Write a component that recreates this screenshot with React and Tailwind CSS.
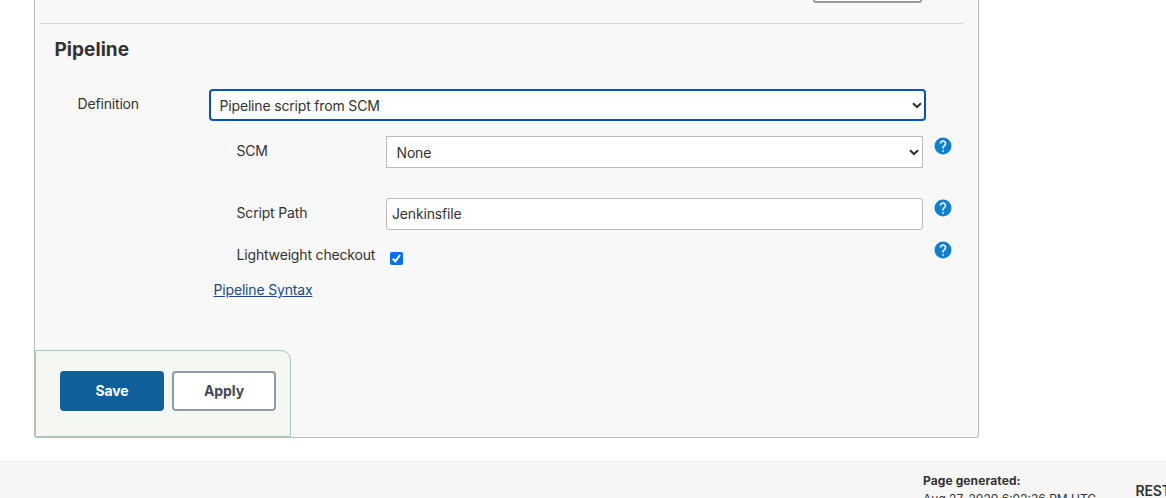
import React from "react";

function HelpIcon() {
  return (
    <svg viewBox="0 0 24 24" className="size-[20px] shrink-0" aria-label="Help">
      <circle cx="12" cy="12" r="10.2" fill="#0f7fcf" />
      <path
        fill="#f8f8f8"
        d="M13 19h-2v-2h2v2zm2.07-7.75l-.9.92C13.45 12.9 13 13.5 13 15h-2v-.5c0-1.1.45-2.1 1.17-2.83l1.24-1.26c.37-.36.59-.86.59-1.41 0-1.1-.9-2-2-2s-2 .9-2 2H8c0-2.21 1.79-4 4-4s4 1.79 4 4c0 .88-.36 1.68-.93 2.25z"
      />
    </svg>
  );
}

function Chevron() {
  return (
    <svg viewBox="0 0 10 7" className="h-[7px] w-[10px] shrink-0" fill="none">
      <path d="M1 1.3 L5 5 L9 1.3" stroke="#303030" strokeWidth="2.1" />
    </svg>
  );
}

export default function App() {
  return (
    <div className="flex h-[498px] w-[1166px] flex-col overflow-hidden bg-white font-['Inter','Liberation_Sans',sans-serif] text-[14px] leading-[20px] tracking-[-0.17px] text-[#333]">
      <main className="ml-[34px] flex h-[438px] w-[945px] shrink-0 flex-col rounded-b-[3px] border border-t-0 border-[#bbb] bg-[#f8f8f8]">
        <div className="flex h-[23px] shrink-0">
          <div className="ml-[778px] h-[3px] w-[109px] rounded-b-[4px] border-2 border-t-0 border-[#929da6] bg-white" />
        </div>
        <div className="ml-[5px] h-px w-[923px] shrink-0 bg-[#d6d6d6]" />
        <h2 className="ml-[19.5px] mt-[12px] h-[28px] shrink-0 text-[19px] font-bold leading-[28px] tracking-[0.05px]">
          Pipeline
        </h2>

        <div className="mt-[25px] flex h-[32px] shrink-0">
          <label className="ml-[42.5px] w-[131.5px] pt-[5px]">Definition</label>
          <div className="flex w-[717px] items-center justify-between rounded-[4px] border-2 border-[#0054bd] bg-white pl-[8.5px] pr-[2px] pt-px">
            <span>Pipeline script from SCM</span>
            <Chevron />
          </div>
        </div>

        <div className="mt-[15px] flex h-[32px] shrink-0">
          <label className="ml-[201.5px] w-[149.5px] pt-[5px]">SCM</label>
          <div className="flex w-[537px] items-center justify-between border border-[#bbb] bg-white pl-[9.5px] pr-[3px] pt-px">
            <span>None</span>
            <Chevron />
          </div>
          <div className="ml-[10px]">
            <HelpIcon />
          </div>
        </div>

        <div className="mt-[30px] flex h-[32px] shrink-0">
          <label className="ml-[201.5px] w-[149.5px] pt-[5px]">Script Path</label>
          <div className="flex w-[537px] items-center rounded-[3px] border border-[#bbb] bg-white pl-[5px]">
            Jenkinsfile
          </div>
          <div className="ml-[10px]">
            <HelpIcon />
          </div>
        </div>

        <div className="mt-[10px] flex h-[30px] shrink-0">
          <label className="ml-[201.5px] w-[153.5px] pt-[5px]">Lightweight checkout</label>
          <div className="mt-[12px] flex size-[13px] items-center justify-center rounded-[2px] bg-[#0070fb]">
            <svg viewBox="0 0 13 13" className="size-[13px]" fill="none">
              <path d="M2.8 6.8 L5.3 9.4 L10 3" stroke="white" strokeWidth="2.1" />
            </svg>
          </div>
          <div className="ml-[530px]">
            <HelpIcon />
          </div>
        </div>

        <a className="ml-[178.5px] mt-[10px] h-[20px] w-fit shrink-0 text-[#204a87] underline">Pipeline Syntax</a>

        <div className="mt-[50px] flex h-[87px] w-[256px] shrink-0 gap-[8px] rounded-tr-[10px] border border-[#a0ccb5] bg-[#f4f7f1] pl-[24px] pt-[20px] text-[14px] font-bold tracking-[-0.1px]">
          <button className="h-[40px] w-[104px] rounded-[4px] bg-[#0f6098] text-white">Save</button>
          <button className="h-[40px] w-[104px] rounded-[4px] border-2 border-[#8f9ba5] bg-white text-[#434b54]">
            Apply
          </button>
        </div>
      </main>

      <footer className="mt-[23px] flex h-[37px] shrink-0 overflow-hidden border-t border-[#e2e9ef] bg-[#f6f6f6]">
        <div className="ml-[923px] w-[212.5px] shrink-0 pt-[10px] text-[12px] leading-[18px] tracking-normal">
          <div className="font-bold tracking-[0.1px]">Page generated:</div>
          <div>Aug 27, 2020 6:02:36 PM UTC</div>
        </div>
        <div className="shrink-0 pt-[19px] text-[14px] font-semibold">REST API</div>
      </footer>
    </div>
  );
}
